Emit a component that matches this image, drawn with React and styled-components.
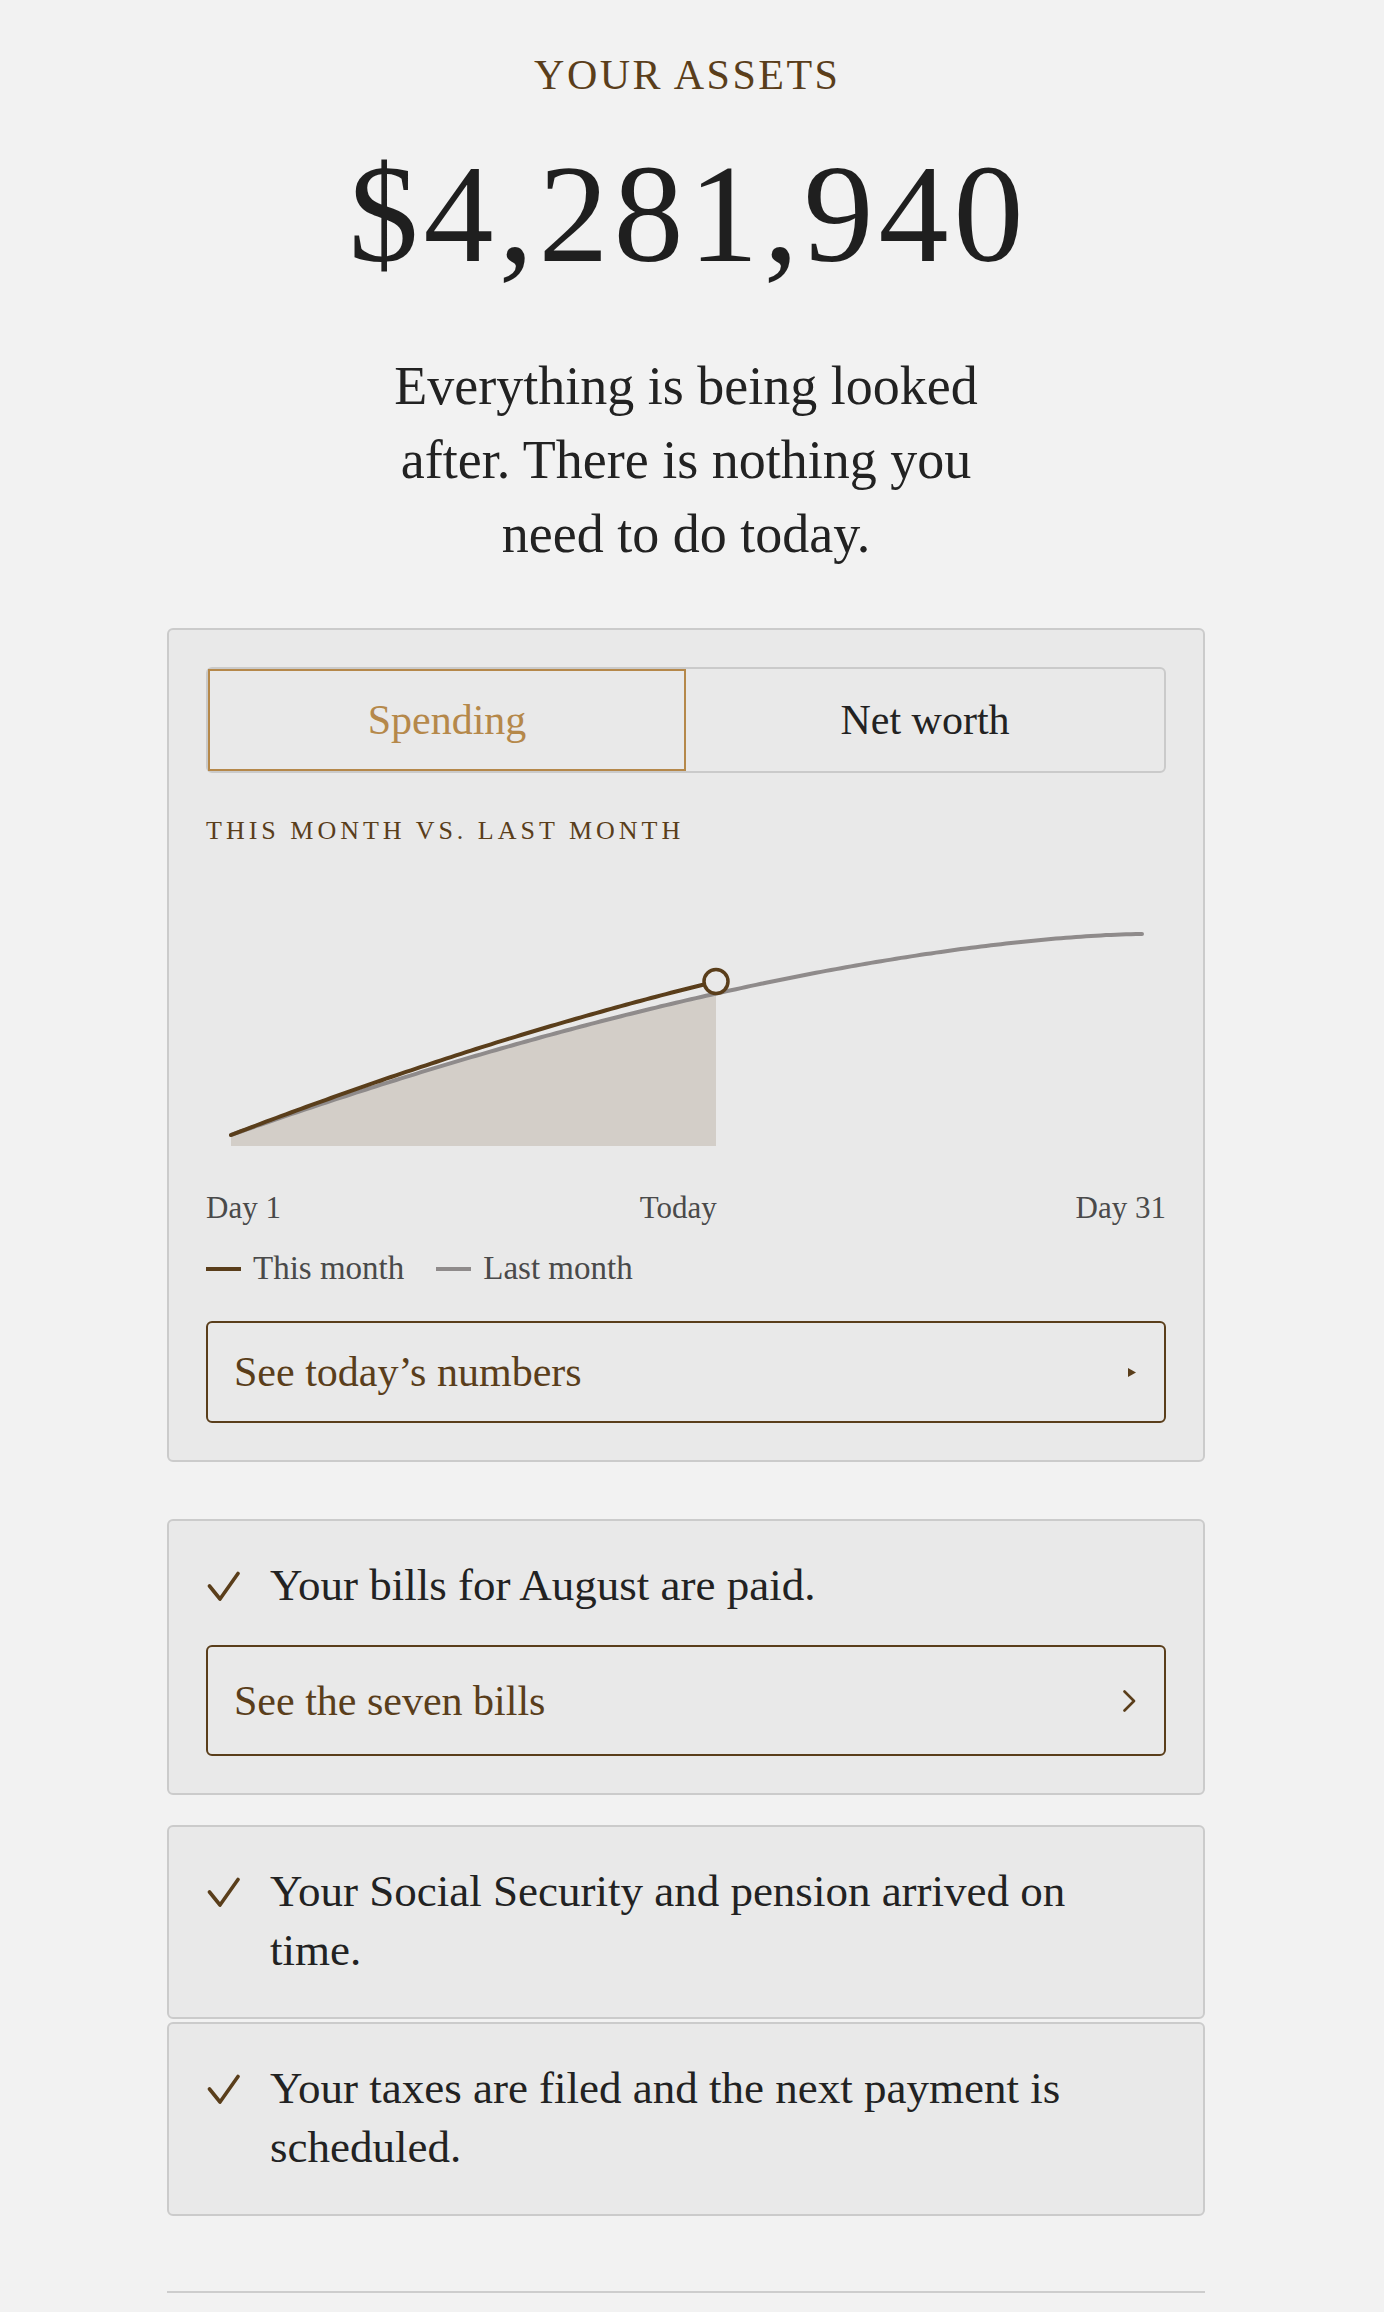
import React from "react";
import styled, { createGlobalStyle } from "styled-components";

const GlobalStyle = createGlobalStyle`
  html, body { margin: 0; padding: 0; background: #f2f2f2; }
  body {
    font-family: "Liberation Serif", "Times New Roman", serif;
    color: #222;
    -webkit-font-smoothing: antialiased;
  }
  *, *::before, *::after { box-sizing: border-box; }
`;

const BROWN = "#5a3e1b";
const GOLD = "#b5884a";
const GRAY_LINE = "#8f8b8b";

const Shell = styled.div`
  padding-right: 12px;
`;

const Page = styled.main`
  width: 1038px;
  margin: 0 auto;
  padding: 54px 0 60px;
  display: flex;
  flex-direction: column;
`;

const Eyebrow = styled.p`
  margin: 0;
  padding-left: 2.5px;
  font-size: 42px;
  line-height: 1;
  letter-spacing: 2.5px;
  color: ${BROWN};
  text-align: center;
  text-transform: uppercase;
`;

const Amount = styled.h1`
  margin: 48px 0 0;
  padding-left: 5px;
  font-size: 140px;
  line-height: 1;
  font-weight: 400;
  letter-spacing: 5px;
  color: #1f1f1f;
  text-align: center;
`;

const Lede = styled.p`
  margin: 65px auto 0;
  max-width: 640px;
  font-size: 54px;
  line-height: 74px;
  color: #222;
  text-align: center;
`;

const Card = styled.section`
  margin-top: ${(p) => p.$gap}px;
  background: #e9e9e9;
  border: 2px solid #cbcbcb;
  border-radius: 6px;
  padding: ${(p) => (p.$chart ? "37px" : "35px 37px 37px")};
  display: flex;
  flex-direction: column;
`;

const Tabs = styled.div`
  display: grid;
  grid-template-columns: 1fr 1fr;
  height: 106px;
  border: 2px solid #cacaca;
  border-radius: 6px;
`;

const Tab = styled.button`
  appearance: none;
  margin: 0;
  background: transparent;
  font-family: inherit;
  font-size: 42px;
  line-height: 1;
  color: ${(p) => (p.$active ? GOLD : "#222")};
  border: 2px solid ${(p) => (p.$active ? GOLD : "transparent")};
  border-radius: 0;
  cursor: pointer;
`;

const ChartLabel = styled.p`
  margin: 45px 0 0;
  font-size: 26px;
  line-height: 1;
  letter-spacing: 4px;
  color: ${BROWN};
  text-transform: uppercase;
`;

const ChartSvg = styled.svg`
  display: block;
  margin-top: 16px;
  width: 960px;
  height: 290px;
`;

const Axis = styled.div`
  display: flex;
  justify-content: space-between;
  margin-top: 42px;
  font-size: 31px;
  line-height: 1;
  color: #4a4a4a;
`;

const Legend = styled.div`
  display: flex;
  align-items: center;
  gap: 32px;
  margin-top: 29px;
  font-size: 33px;
  line-height: 1;
  color: #4a4a4a;
`;

const LegendItem = styled.span`
  display: inline-flex;
  align-items: center;
  gap: 12px;
`;

const Swatch = styled.span`
  display: inline-block;
  width: 35px;
  height: 4px;
  background: ${(p) => p.$color};
`;

const LinkButton = styled.button`
  appearance: none;
  margin: ${(p) => p.$top}px 0 0;
  width: 100%;
  height: ${(p) => p.$height}px;
  padding: 0 28px 0 26px;
  display: flex;
  align-items: center;
  justify-content: space-between;
  background: transparent;
  border: 2px solid ${BROWN};
  border-radius: 6px;
  font-family: inherit;
  font-size: 42px;
  line-height: 1;
  color: ${BROWN};
  text-align: left;
  cursor: pointer;
`;

const Row = styled.div`
  display: flex;
  align-items: flex-start;
`;

const CheckBox = styled.span`
  flex: 0 0 34px;
  height: 59px;
  margin-right: 30px;
  display: flex;
  align-items: center;
`;

const RowText = styled.p`
  margin: 0;
  max-width: 850px;
  font-size: 45px;
  line-height: 59px;
  color: #222;
`;

const Divider = styled.hr`
  margin: 75px 0 0;
  border: 0;
  height: 2px;
  background: #cdcdcd;
`;

const X0 = 25;
const X1 = 936;
const Y0 = 275;
const DROP = 201;
const TODAY_X = 510;
const BASE = 286;

const curve = (x, k) => {
  const t = (x - X0) / (X1 - X0);
  return Y0 - k * DROP * (1 - Math.pow(1 - t, 1.6));
};

const points = (from, to, k) => {
  const out = [];
  for (let x = from; x < to; x += 5) out.push([x, curve(x, k)]);
  out.push([to, curve(to, k)]);
  return out;
};

const toLine = (pts) =>
  pts.map(([x, y], i) => `${i ? "L" : "M"}${x.toFixed(1)} ${y.toFixed(1)}`).join(" ");

function Chart() {
  const gray = points(X0, X1, 1);
  const fill = points(X0, TODAY_X, 1);
  const brown = points(X0, TODAY_X, 1.085);
  const fillPath =
    `M${X0} ${BASE} ` +
    fill.map(([x, y]) => `L${x.toFixed(1)} ${y.toFixed(1)}`).join(" ") +
    ` L${TODAY_X} ${BASE} Z`;
  const my = curve(TODAY_X, 1.085);
  return (
    <ChartSvg viewBox="0 0 960 290" aria-hidden="true">
      <path d={fillPath} fill="#d3cec8" />
      <path d={toLine(gray)} fill="none" stroke={GRAY_LINE} strokeWidth="4" strokeLinecap="round" />
      <path d={toLine(brown)} fill="none" stroke={BROWN} strokeWidth="4" strokeLinecap="round" />
      <circle cx={TODAY_X} cy={my} r="12" fill="#e9e9e9" stroke={BROWN} strokeWidth="3.5" />
    </ChartSvg>
  );
}

const Check = () => (
  <svg width="34" height="30" viewBox="0 0 34 30" aria-hidden="true">
    <polyline points="3.5,15 14,28 32,2.5" fill="none" stroke={BROWN} strokeWidth="3.6" strokeLinecap="round" strokeLinejoin="round" />
  </svg>
);

const Triangle = () => (
  <svg width="8" height="9" viewBox="0 0 8 9" aria-hidden="true">
    <polygon points="0,0 8,4.5 0,9" fill={BROWN} />
  </svg>
);

const Chevron = () => (
  <svg width="14" height="22" viewBox="0 0 14 22" aria-hidden="true">
    <path d="M2.5 1.5 Q8 7 12 11 Q8 15 2.5 20.5" fill="none" stroke={BROWN} strokeWidth="2.6" strokeLinecap="round" strokeLinejoin="round" />
  </svg>
);

function CheckRow({ children }) {
  return (
    <Row>
      <CheckBox>
        <Check />
      </CheckBox>
      <RowText>{children}</RowText>
    </Row>
  );
}

export default function App() {
  return (
    <Shell>
      <GlobalStyle />
      <Page>
        <Eyebrow>Your assets</Eyebrow>
        <Amount>$4,281,940</Amount>
        <Lede>Everything is being looked after. There is nothing you need to do today.</Lede>

        <Card $gap={57} $chart>
          <Tabs>
            <Tab $active>Spending</Tab>
            <Tab>Net worth</Tab>
          </Tabs>
          <ChartLabel>This month vs. last month</ChartLabel>
          <Chart />
          <Axis>
            <span>Day 1</span>
            <span>Today</span>
            <span>Day 31</span>
          </Axis>
          <Legend>
            <LegendItem>
              <Swatch $color={BROWN} />
              This month
            </LegendItem>
            <LegendItem>
              <Swatch $color={GRAY_LINE} />
              Last month
            </LegendItem>
          </Legend>
          <LinkButton $top={36} $height={102}>
            <span>See today’s numbers</span>
            <Triangle />
          </LinkButton>
        </Card>

        <Card $gap={57}>
          <CheckRow>Your bills for August are paid.</CheckRow>
          <LinkButton $top={30} $height={111}>
            <span>See the seven bills</span>
            <Chevron />
          </LinkButton>
        </Card>

        <Card $gap={30}>
          <CheckRow>Your Social Security and pension arrived on time.</CheckRow>
        </Card>
        <Card $gap={3}>
          <CheckRow>Your taxes are filed and the next payment is scheduled.</CheckRow>
        </Card>

        <Divider />
      </Page>
    </Shell>
  );
}
